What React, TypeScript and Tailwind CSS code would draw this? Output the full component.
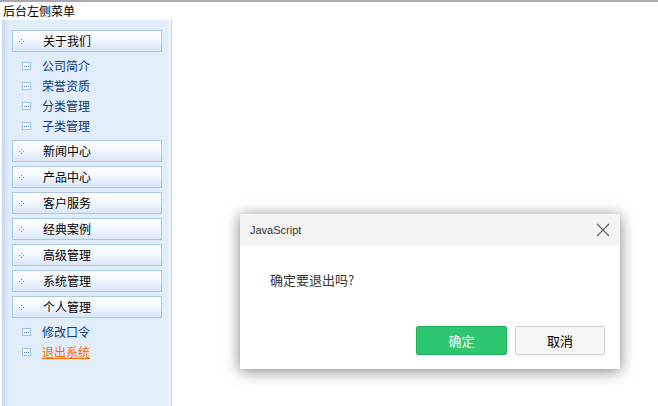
import React from "react";

type Group = { title: string; items?: { label: string; active?: boolean }[] };

const groups: Group[] = [
  {
    title: "关于我们",
    items: [{ label: "公司简介" }, { label: "荣誉资质" }, { label: "分类管理" }, { label: "子类管理" }],
  },
  { title: "新闻中心" },
  { title: "产品中心" },
  { title: "客户服务" },
  { title: "经典案例" },
  { title: "高级管理" },
  { title: "系统管理" },
  {
    title: "个人管理",
    items: [{ label: "修改口令" }, { label: "退出系统", active: true }],
  },
];

const cjk = "font-['SimSun','Noto_Sans_CJK_SC',sans-serif]";

const DotCross = () => (
  <svg width="5" height="5" viewBox="0 0 5 5" className="shrink-0">
    <rect x="2" y="0" width="1" height="1" fill="#4a86cc" />
    <rect x="0" y="2" width="1" height="1" fill="#4a86cc" />
    <rect x="4" y="2" width="1" height="1" fill="#4a86cc" />
    <rect x="2" y="4" width="1" height="1" fill="#4a86cc" />
  </svg>
);

const ItemIcon = () => (
  <svg width="9" height="8" viewBox="0 0 9 8" className="shrink-0">
    <rect x="0.5" y="0.5" width="8" height="7" fill="#fff" stroke="#9dbfe6" />
    <rect x="2" y="4" width="1" height="1" fill="#3a6fb0" />
    <rect x="4" y="4" width="1" height="1" fill="#3a6fb0" />
    <rect x="6" y="4" width="1" height="1" fill="#3a6fb0" />
  </svg>
);

const Sidebar = () => (
  <div className="ml-[2px] flex w-[170px] flex-1 flex-col gap-[4px] border-r border-[#c3d8f0] bg-[linear-gradient(to_right,#c4d9f2,#e2edfa_7px,#e2edfa_calc(100%-4px),#f0f6fd)] pt-[10px]">
    {groups.map((g) => (
      <div key={g.title} className="flex flex-col gap-[4px]">
        <div className="ml-[10px] flex h-[22px] w-[150px] items-center border border-[#a7c7eb] bg-[linear-gradient(to_bottom,#ffffff,#f3f8fe_45%,#d9e7f8)]">
          <span className="ml-[6px] w-[24px]">
            <DotCross />
          </span>
          <span className={`${cjk} text-[12px] leading-[12px] text-black`}>{g.title}</span>
        </div>
        {g.items && (
          <div className="flex flex-col">
            {g.items.map((it) => (
              <div key={it.label} className="flex h-[20px] items-center pl-[20px]">
                <span className="w-[20px]">
                  <ItemIcon />
                </span>
                <span
                  className={`${cjk} text-[12px] leading-[14px] ${
                    it.active ? "text-[#ff6a00] underline" : "text-[#0d3c74]"
                  }`}
                >
                  {it.label}
                </span>
              </div>
            ))}
          </div>
        )}
      </div>
    ))}
  </div>
);

const ConfirmDialog = () => (
  <div className="absolute left-[240px] top-[212px] flex h-[155px] w-[380px] flex-col bg-white shadow-[0_2px_14px_rgba(0,0,0,0.5)]">
    <div className="flex h-[32px] items-center justify-between bg-[#f4f4f4] pl-[10px] pr-[10px]">
      <span className="font-['Liberation_Sans',sans-serif] text-[11px] text-[#333]">JavaScript</span>
      <svg width="14" height="14" viewBox="0 0 14 14">
        <path d="M1 1L13 13M13 1L1 13" stroke="#666" strokeWidth="1.2" />
      </svg>
    </div>
    <div className={`${cjk} flex-1 pl-[30px] pt-[24px] text-[13px] leading-[20px] text-[#333]`}>确定要退出吗?</div>
    <div className="flex justify-end gap-[8px] pb-[14px] pr-[15px]">
      <button
        type="button"
        className={`${cjk} h-[29px] w-[91px] rounded-[2px] border border-[#20b35e] bg-[#2ec770] text-[13px] text-white`}
      >
        确定
      </button>
      <button
        type="button"
        className={`${cjk} h-[29px] w-[90px] rounded-[2px] border border-[#cfcfcf] bg-[#f7f7f7] text-[13px] text-black`}
      >
        取消
      </button>
    </div>
  </div>
);

export default function App() {
  return (
    <div className="relative flex h-[406px] w-[658px] flex-col overflow-hidden border-t-2 border-[#a9a9b1] bg-white">
      <div className={`${cjk} h-[18px] pl-[3px] text-[12px] leading-[18px] text-black`}>后台左侧菜单</div>
      <Sidebar />
      <ConfirmDialog />
    </div>
  );
}
